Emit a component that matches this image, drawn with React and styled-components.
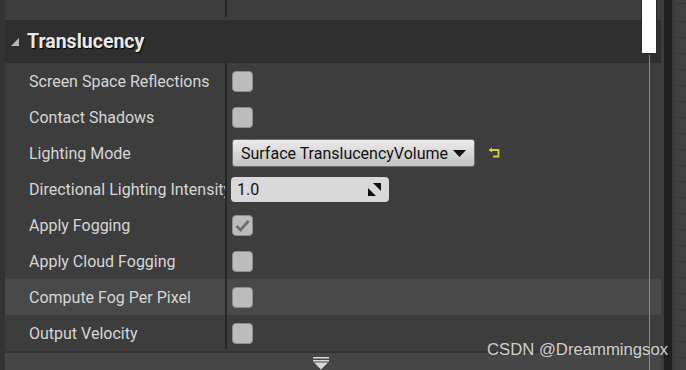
import React from 'react';
import styled, { createGlobalStyle } from 'styled-components';

const GlobalStyle = createGlobalStyle`
  html, body {
    margin: 0;
    padding: 0;
    background: #3d3d3d;
    overflow: hidden;
  }
`;

const Screen = styled.div`
  position: relative;
  display: flex;
  width: 686px;
  height: 370px;
  font-family: Roboto, "Noto Sans", sans-serif;
`;

const Panel = styled.div`
  position: relative;
  flex: 0 0 664px;
  display: flex;
  flex-direction: column;
  box-sizing: border-box;
  background: #3d3d3d;
  border-left: 5px solid #333333;
  padding-right: 3px;
`;

const TopRow = styled.div`
  height: 20px;
  display: grid;
  grid-template-columns: 220px 2px 1fr;
`;

const TopDivider = styled.div`
  grid-column: 2;
  height: 17px;
  background: #262626;
`;

const Header = styled.div`
  height: 43px;
  display: flex;
  align-items: center;
  gap: 7px;
  padding-left: 5px;
  background: #2f2f2f;
`;

const HeaderTitle = styled.span`
  color: #e8e8e8;
  font-size: 19.5px;
  font-weight: 700;
  text-shadow: 1px 1px 1px #000;
`;

const Row = styled.div`
  height: 36px;
  display: grid;
  grid-template-columns: 220px 2px 1fr;
  background: ${p => (p.$highlight ? '#494949' : '#3d3d3d')};
`;

const Label = styled.div`
  display: flex;
  align-items: center;
  padding-left: 24px;
  color: #d6d6d6;
  font-size: 16px;
  white-space: nowrap;
  overflow: hidden;
`;

const Divider = styled.div`
  background: #262626;
  margin-bottom: ${p => (p.$last ? '2px' : '0')};
`;

const Value = styled.div`
  display: flex;
  align-items: center;
  gap: 13px;
  padding-left: 5px;
`;

const Check = styled.div`
  width: 21px;
  height: 21px;
  box-sizing: border-box;
  border-radius: 4px;
  background: #bcbcbc;
  border: 1px solid #8e8e8e;
  display: flex;
  align-items: center;
  justify-content: center;
`;

const Combo = styled.div`
  width: 243px;
  height: 28px;
  box-sizing: border-box;
  display: flex;
  align-items: center;
  justify-content: space-between;
  padding: 0 8px 0 8px;
  border: 1px solid #6e6e6e;
  border-radius: 3px;
  background: linear-gradient(#ececec, #c2c2c2);
  color: #111;
  font-size: 16px;
`;

const NumberField = styled.div`
  width: 158px;
  height: 25px;
  box-sizing: border-box;
  margin-left: -1px;
  display: flex;
  align-items: center;
  justify-content: space-between;
  padding: 0 8px 0 6px;
  border-radius: 4px;
  background: #d9d9d9;
  color: #111;
  font-size: 16px;
`;

const Footer = styled.div`
  flex: 1;
  display: flex;
  align-items: flex-start;
  padding: 4px 0 0 308px;
  border-top: 2px solid #333333;
  background: #464646;
`;

const ScrollThumb = styled.div`
  position: absolute;
  left: 636px;
  top: 0;
  width: 16px;
  height: 54px;
  box-sizing: border-box;
  background: #ffffff;
  border: 1px solid #2a2a2a;
  border-top: none;
  border-radius: 0 0 2px 2px;
`;

const ScrollTrack = styled.div`
  position: absolute;
  left: 644px;
  top: 55px;
  bottom: 0;
  width: 1px;
  background: #8a8a8a;
`;

const DarkStrip = styled.div`
  flex: 0 0 8px;
  background: #202020;
`;

const Graph = styled.div`
  flex: 1;
  border-left: 3px solid #3a3a3a;
  background-color: #414141;
  background-image:
    repeating-linear-gradient(to bottom, transparent 0 15px, #363636 15px 16px),
    repeating-linear-gradient(to right, transparent 0 15px, #383838 15px 16px);
  background-position: 0 6px, 4px 0;
`;

const Watermark = styled.div`
  position: absolute;
  left: 487px;
  top: 340px;
  color: #cfcfcf;
  font-family: "Liberation Sans", Arial, sans-serif;
  font-size: 16.7px;
  white-space: nowrap;
`;

const Triangle = () => (
  <svg width="10" height="10" viewBox="0 0 10 10">
    <path d="M9 1 L9 9 L1 9 Z" fill="#b8b8b8" />
  </svg>
);

const CheckMark = () => (
  <svg width="15" height="13" viewBox="0 0 15 13">
    <path d="M1.5 7 L5.5 11 L13.5 2" stroke="#707070" strokeWidth="2.8" fill="none" strokeLinejoin="miter" />
  </svg>
);

const ComboArrow = () => (
  <svg width="13" height="7" viewBox="0 0 13 7">
    <path d="M0 0 H13 L6.5 7 Z" fill="#111" />
  </svg>
);

const SpinIcon = () => (
  <svg width="13" height="13" viewBox="0 0 13 13">
    <path d="M5 0 H13 V8 Z" fill="#111" />
    <path d="M0 5 V13 H8 Z" fill="#111" />
  </svg>
);

const ResetIcon = () => (
  <svg width="12" height="12" viewBox="0 0 12 12">
    <path d="M3 3 H10.5 V9.5 H5" stroke="#d4d02c" strokeWidth="1.8" fill="none" />
    <path d="M0.5 3 L4 0.5 V5.5 Z" fill="#d4d02c" />
  </svg>
);

const FooterArrow = () => (
  <svg width="16" height="13" viewBox="0 0 16 13">
    <rect x="0" y="0" width="16" height="1.5" fill="#d8d8d8" />
    <rect x="0" y="3" width="16" height="1.5" fill="#d8d8d8" />
    <path d="M1 5.5 H15 L8 12.5 Z" fill="#d8d8d8" />
  </svg>
);

const rows = [
  { label: 'Screen Space Reflections', type: 'check' },
  { label: 'Contact Shadows', type: 'check' },
  { label: 'Lighting Mode', type: 'combo', value: 'Surface TranslucencyVolume' },
  { label: 'Directional Lighting Intensity', type: 'number', value: '1.0' },
  { label: 'Apply Fogging', type: 'check', checked: true },
  { label: 'Apply Cloud Fogging', type: 'check' },
  { label: 'Compute Fog Per Pixel', type: 'check', highlight: true },
  { label: 'Output Velocity', type: 'check' },
];

const renderValue = (row) => {
  if (row.type === 'combo') {
    return (
      <>
        <Combo>
          <span>{row.value}</span>
          <ComboArrow />
        </Combo>
        <ResetIcon />
      </>
    );
  }
  if (row.type === 'number') {
    return (
      <NumberField>
        <span>{row.value}</span>
        <SpinIcon />
      </NumberField>
    );
  }
  return <Check>{row.checked && <CheckMark />}</Check>;
};

const App = () => {
  return (
    <Screen>
      <GlobalStyle />
      <Panel>
        <TopRow>
          <TopDivider />
        </TopRow>
        <Header>
          <Triangle />
          <HeaderTitle>Translucency</HeaderTitle>
        </Header>
        {rows.map((row, i) => (
          <Row key={row.label} $highlight={row.highlight}>
            <Label>{row.label}</Label>
            <Divider $last={i === rows.length - 1} />
            <Value>{renderValue(row)}</Value>
          </Row>
        ))}
        <Footer>
          <FooterArrow />
        </Footer>
        <ScrollThumb />
        <ScrollTrack />
      </Panel>
      <DarkStrip />
      <Graph />
      <Watermark>CSDN @Dreammingsox</Watermark>
    </Screen>
  );
};

export default App;
